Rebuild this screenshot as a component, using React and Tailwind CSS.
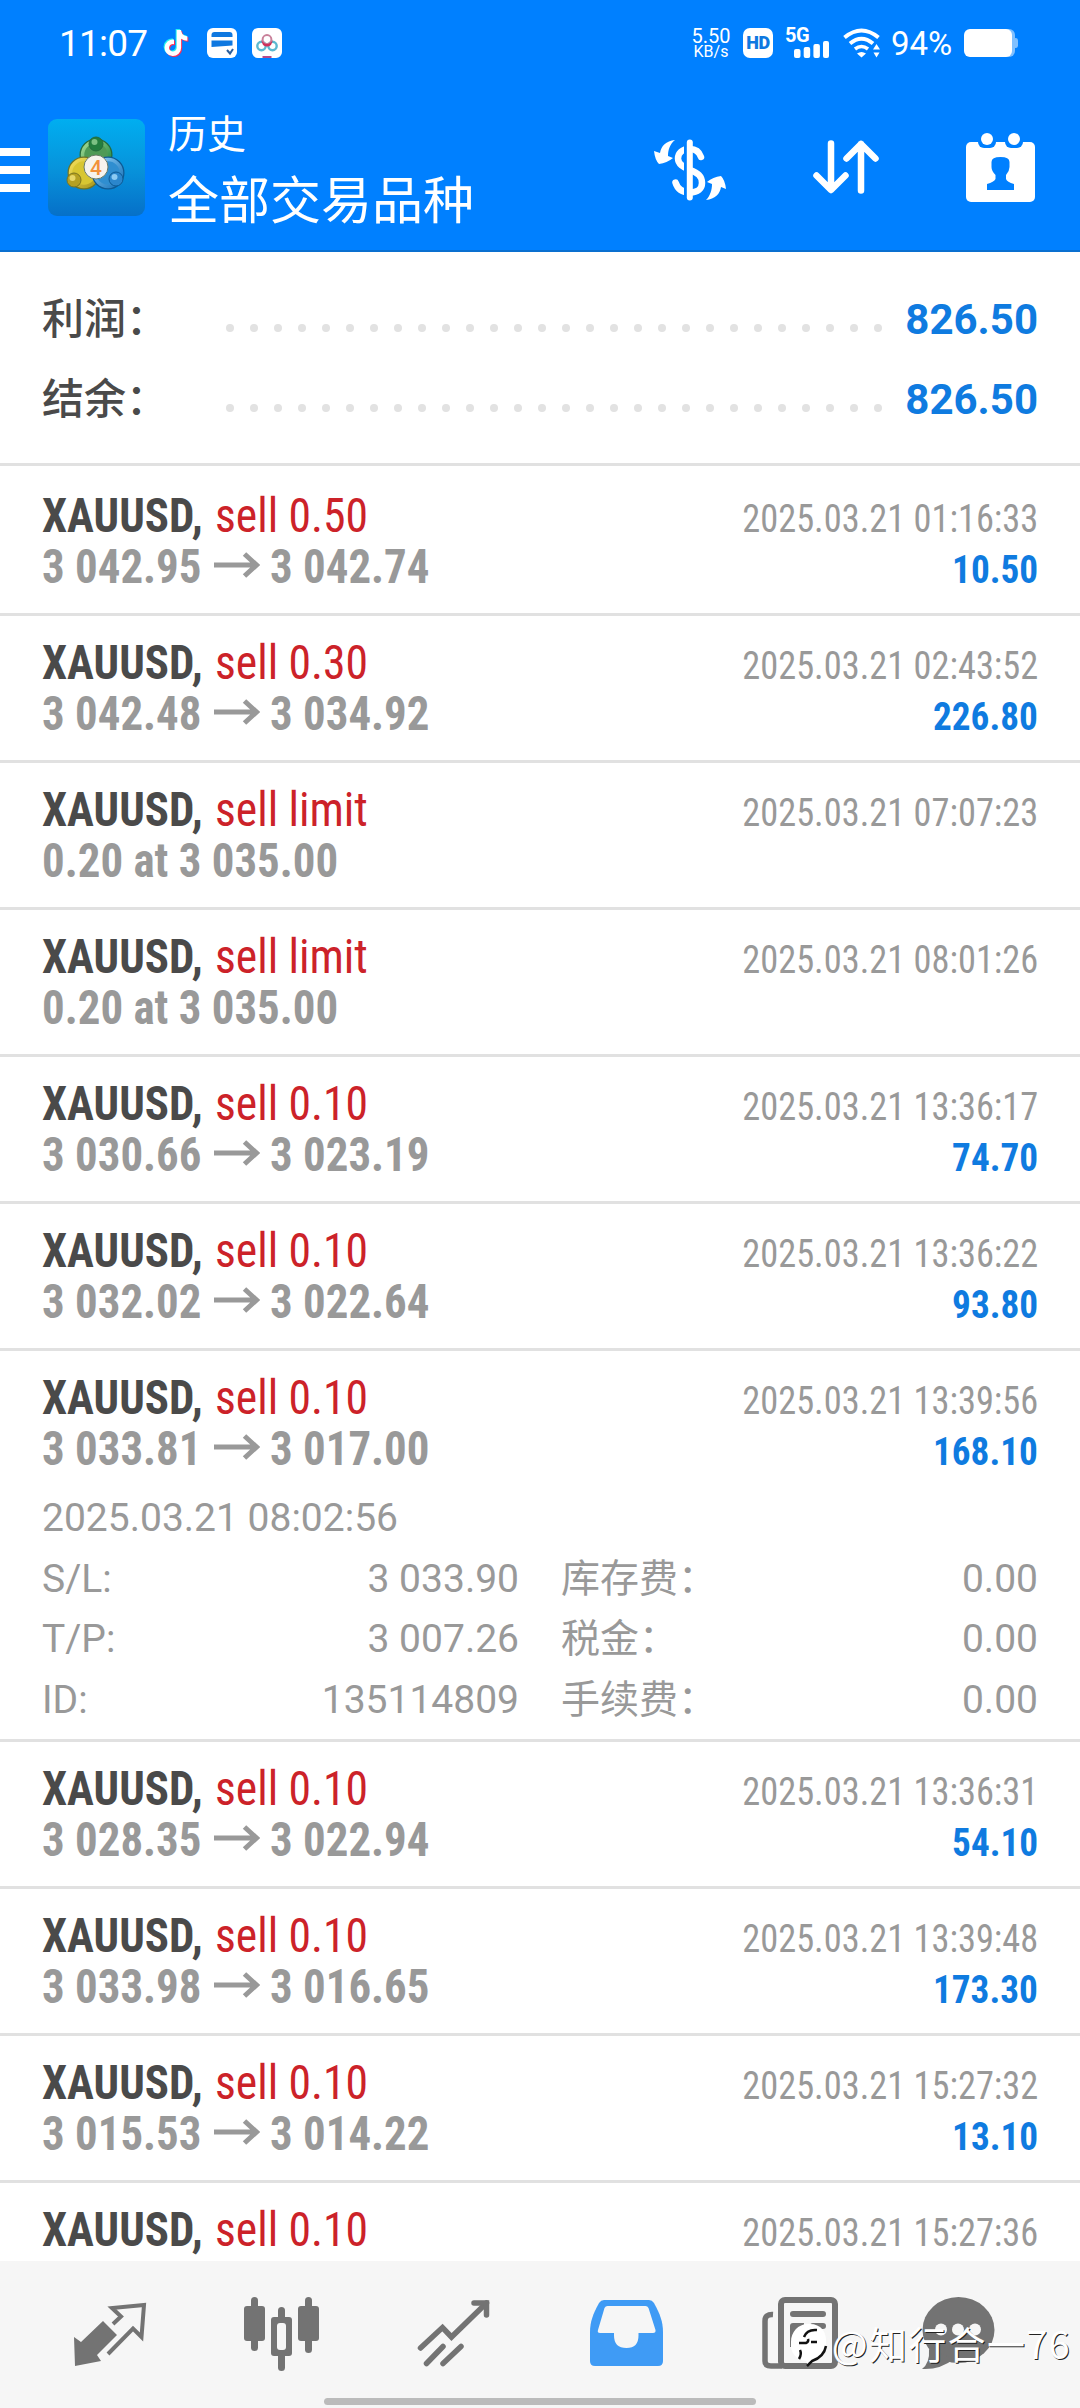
import { FaTiktok } from 'react-icons/fa6'

const SUMMARY = [
  { label: '利润：', value: '826.50' },
  { label: '结余：', value: '826.50' },
]

const DEALS = [
  { action: 'sell 0.50', from: '3 042.95', to: '3 042.74', time: '2025.03.21 01:16:33', profit: '10.50' },
  { action: 'sell 0.30', from: '3 042.48', to: '3 034.92', time: '2025.03.21 02:43:52', profit: '226.80' },
  { action: 'sell limit', order: '0.20 at 3 035.00', time: '2025.03.21 07:07:23' },
  { action: 'sell limit', order: '0.20 at 3 035.00', time: '2025.03.21 08:01:26' },
  { action: 'sell 0.10', from: '3 030.66', to: '3 023.19', time: '2025.03.21 13:36:17', profit: '74.70' },
  { action: 'sell 0.10', from: '3 032.02', to: '3 022.64', time: '2025.03.21 13:36:22', profit: '93.80' },
  {
    action: 'sell 0.10',
    from: '3 033.81',
    to: '3 017.00',
    time: '2025.03.21 13:39:56',
    profit: '168.10',
    details: {
      opened: '2025.03.21 08:02:56',
      rows: [
        ['S/L:', '3 033.90', '库存费：', '0.00'],
        ['T/P:', '3 007.26', '税金：', '0.00'],
        ['ID:', '135114809', '手续费：', '0.00'],
      ],
    },
  },
  { action: 'sell 0.10', from: '3 028.35', to: '3 022.94', time: '2025.03.21 13:36:31', profit: '54.10' },
  { action: 'sell 0.10', from: '3 033.98', to: '3 016.65', time: '2025.03.21 13:39:48', profit: '173.30' },
  { action: 'sell 0.10', from: '3 015.53', to: '3 014.22', time: '2025.03.21 15:27:32', profit: '13.10' },
  { action: 'sell 0.10', time: '2025.03.21 15:27:36' },
]

function StatusBar() {
  return (
    <div className="flex h-[84px] items-center pl-[59px] pr-[62px] pt-[2px] text-white">
      <span className="w-[93px] text-[37px] leading-none tracking-[-0.8px]">11:07</span>
      {/* Notification icons */}
      <div className="relative ml-[11px] size-[26px]">
        <FaTiktok size={26} className="absolute -left-px -top-px text-[#25f4ee]" />
        <FaTiktok size={26} className="absolute left-px top-px text-[#fe2c55]" />
        <FaTiktok size={26} className="absolute left-0 top-0" />
      </div>
      <svg className="ml-[18px]" width="30" height="30" viewBox="0 0 30 30">
        <rect width="30" height="30" rx="6" fill="#fff" />
        <path d="M4.500 9V7q0-3 3-3h15q3 0 3 3v2z" fill="#0f78e0" />
        <path d="M4.500 12.500h21v5l-21 1.500z" fill="#0f78e0" />
        <path d="M20 22l3 3.500 3-4.500" fill="none" stroke="#2b5f9e" strokeWidth="2" />
      </svg>
      <svg className="ml-[15px]" width="30" height="30" viewBox="0 0 30 30">
        <rect width="30" height="30" rx="6" fill="#fff" />
        <circle cx="9.500" cy="18" r="4.200" fill="none" stroke="#5bb9d0" strokeWidth="2.400" />
        <circle cx="20.500" cy="18" r="4.200" fill="none" stroke="#5bb9d0" strokeWidth="2.400" />
        <circle cx="15" cy="11.500" r="4.400" fill="none" stroke="#c9809a" strokeWidth="2" />
        <path d="M9 12q6 8 12 0l-2 5q-4 3-8 0z" fill="#d0305a" />
        <path d="M10.500 28h9v2h-9z" fill="#b84a8c" />
      </svg>

      <div className="ml-auto flex w-[40px] flex-col items-center">
        <span className="text-[20px] leading-[16px]">5.50</span>
        <span className="text-[16px] leading-[15px]">KB/s</span>
      </div>
      <div className="ml-[12px] flex h-[30px] w-[30px] items-center justify-center rounded-[7px] bg-white text-[18px] font-black leading-none tracking-[-0.5px] text-[#0f78e0]">
        HD
      </div>
      <div className="ml-[12px] flex h-[30px] w-[46px] flex-col">
        <span className="text-[20px] font-bold leading-[14px] tracking-[-0.5px]">5G</span>
        <svg className="-mt-px ml-[9px]" width="36" height="17" viewBox="0 0 36 17" fill="#fff">
          <rect x="0" y="8" width="6.500" height="9" rx="2" />
          <rect x="9.700" y="6" width="6.500" height="11" rx="2" />
          <rect x="19.400" y="3" width="6.500" height="14" rx="2" />
          <rect x="29" y="0" width="6" height="17" rx="2" />
        </svg>
      </div>
      <svg className="ml-[12px]" width="38" height="30" viewBox="0 0 38 30" fill="none" stroke="#fff" strokeWidth="4">
        <path d="M1.500 9.500Q18.500-4.500 35.500 9.500" />
        <path d="M7 15.500q11.500-9.500 23 0" />
        <path d="M12 21q6.500-5 13 0" strokeWidth="3.600" />
        <path d="M14 25.500l4.500 4 4.500-4q-4.500-3-9 0z" fill="#fff" stroke="none" />
        <path d="M33.500 16l3.500 5.500h-7zM33.500 29.500l3-5h-6z" fill="#fff" stroke="none" />
      </svg>
      <span className="ml-[10px] w-[64px] text-[33px] leading-none">94%</span>
      <svg className="ml-[9px]" width="54" height="28" viewBox="0 0 54 28">
        <rect x="2" width="49" height="28" rx="6" fill="#80c0ff" />
        <rect x="49" y="9" width="5" height="10" rx="2.500" fill="#80c0ff" />
        <rect width="48" height="28" rx="6" fill="#fff" />
      </svg>
    </div>
  )
}

function AppLogo() {
  return (
    <svg className="ml-[18px]" width="97" height="97" viewBox="0 0 97 97">
      <defs>
        <linearGradient id="tile" x1="0" y1="0" x2="0" y2="1">
          <stop offset="0" stopColor="#00aef0" />
          <stop offset="0.500" stopColor="#0794dc" />
          <stop offset="1" stopColor="#0670c8" />
        </linearGradient>
        <linearGradient id="green" x1="0" y1="0" x2="1" y2="1">
          <stop offset="0" stopColor="#a6dc96" />
          <stop offset="1" stopColor="#17813a" />
        </linearGradient>
        <linearGradient id="yellow" x1="0" y1="0" x2="1" y2="1">
          <stop offset="0" stopColor="#f5e15a" />
          <stop offset="1" stopColor="#a8961c" />
        </linearGradient>
        <linearGradient id="blue" x1="0" y1="0" x2="1" y2="1">
          <stop offset="0" stopColor="#8fd0f7" />
          <stop offset="1" stopColor="#1470b8" />
        </linearGradient>
      </defs>
      <rect width="97" height="97" rx="9" fill="url(#tile)" />
      <circle cx="48" cy="36" r="15" fill="#4f9a56" stroke="#256b3c" strokeWidth="3" />
      <circle cx="48" cy="36" r="13.500" fill="none" stroke="url(#green)" strokeWidth="3.500" />
      <circle cx="36" cy="54" r="15" fill="#d8c632" stroke="#6e7426" strokeWidth="3" />
      <circle cx="36" cy="54" r="13.500" fill="none" stroke="url(#yellow)" strokeWidth="3.500" />
      <circle cx="60" cy="54" r="15" fill="#2f8ed0" stroke="#0d5a94" strokeWidth="3" />
      <circle cx="60" cy="54" r="13.500" fill="none" stroke="url(#blue)" strokeWidth="3.500" />
      <circle cx="48" cy="25" r="7" fill="#237d3e" stroke="#256b3c" />
      <circle cx="46.500" cy="23" r="3" fill="#7cc083" />
      <circle cx="26" cy="61" r="7" fill="#b5a022" stroke="#7b7420" />
      <circle cx="24.500" cy="59" r="3" fill="#e6d668" />
      <circle cx="68" cy="60" r="7" fill="#2b86cc" stroke="#0d5a94" />
      <circle cx="66.500" cy="58" r="3" fill="#8ccaf2" />
      <circle cx="48" cy="48" r="12" fill="#f6f3ee" stroke="#6b7c6a" />
      <text x="48" y="55.500" textAnchor="middle" fontSize="21" fontWeight="500" fontFamily="Roboto" fill="#f2913a">
        4
      </text>
    </svg>
  )
}

function Toolbar() {
  return (
    <div className="flex h-[166px] items-center text-white">
      <div className="flex w-[30px] flex-col gap-[10px] pt-[6px]">
        <div className="h-[8px] bg-white" />
        <div className="h-[8px] bg-white" />
        <div className="h-[8px] bg-white" />
      </div>
      <AppLogo />
      <div className="ml-[23px] flex flex-col pt-[13px]">
        <span className="text-[39px] leading-[54px]">历史</span>
        <span className="mt-[3px] text-[51px] leading-[74px]">全部交易品种</span>
      </div>

      <div className="ml-auto flex items-center pr-[45px]">
        <svg width="100" height="90" viewBox="0 0 100 90" fill="none">
          <path
            d="M61 35C59 29 55 27 50 27C42 27 38 31 38 36.500C38 42 43 45 50 48C58 51 62 54 62 61C62 66.500 58 70.500 50 70.500C42 70.500 37.500 67 35.500 60.500"
            stroke="#fff"
            strokeWidth="6.500"
            strokeLinecap="round"
          />
          <path d="M45.500 20v56" stroke="#0080ff" strokeWidth="3" />
          <path d="M49.800 20.500v55" stroke="#fff" strokeWidth="6" strokeLinecap="round" />
          <path d="M35 18C26 19 21 24 20 31L14 29Q15 38 19 42Q27 41 33 36L28 34C28 28 30 22 35 18Z" fill="#fff" />
          <path d="M66 78C75 77 80 72 81 65L86 67Q85 58 81 54Q73 55 67 60L72 62C72 68 70 74 66 78Z" fill="#fff" />
        </svg>
        <svg
          className="ml-[73px]"
          width="66"
          height="54"
          viewBox="0 0 66 54"
          fill="none"
          stroke="#fff"
          strokeWidth="6.500"
          strokeLinecap="round"
          strokeLinejoin="round"
        >
          <path d="M18 3.500v46M3.500 35.500L18 50l14.500-14.500" />
          <path d="M48 50.500V4M33.500 18.500L48 4l14.500 14.500" />
        </svg>
        <svg className="ml-[87px]" width="69" height="69" viewBox="0 0 69 69" fill="#fff">
          <rect y="9" width="69" height="60" rx="5" />
          <rect x="12" y="-3" width="18" height="18" rx="6" fill="#0080ff" />
          <rect x="39" y="-3" width="18" height="18" rx="6" fill="#0080ff" />
          <circle cx="21" cy="6" r="6" />
          <circle cx="48" cy="6" r="6" />
          <path
            d="M25.500 29Q25.500 24 34.500 24Q43.500 24 43.500 29V34Q43.500 38 40 42V46Q41 49 48 51V57H21V51Q28 49 29.500 46V42Q25.500 38 25.500 34Z"
            fill="#0080ff"
          />
        </svg>
      </div>
    </div>
  )
}

function SummaryRow({ label, value }) {
  return (
    <div className="flex h-[80px] items-center">
      <span className="w-[184px] text-[42px] font-medium leading-[80px] text-[#4a4a4a]">{label}</span>
      <div className="flex flex-1 justify-between pt-[16px]">
        {Array.from({ length: 28 }, (_, i) => (
          <div key={i} className="size-[8px] rounded-full bg-[#e2e2e2]" />
        ))}
      </div>
      <span className="w-[156px] text-right text-[42px] font-bold leading-[80px] text-[#0f7be0]">{value}</span>
    </div>
  )
}

function PriceLine({ order, from, to }) {
  if (order) return <span className="origin-left scale-x-[0.935]">{order}</span>
  return (
    <>
      <span className="w-[172px] origin-left scale-x-[0.935] whitespace-nowrap">{from}</span>
      <svg width="46" height="31" viewBox="0 0 46 31" fill="none" stroke="currentColor" strokeWidth="5">
        <path d="M0 13h42M30.500 2l12 11-12 11" />
      </svg>
      <span className="ml-[10px] origin-left scale-x-[0.935]">{to}</span>
    </>
  )
}

function DealRow({ deal }) {
  const { action, order, from, to, time, profit, details } = deal
  return (
    <div className="border-b-[3px] border-[#e1e1e1] px-[42px] pt-[21px] first:pt-[24px]">
      <div className="font-['Roboto_Condensed','Noto_Sans_CJK_SC',sans-serif]">
        <div className="flex h-[51px] items-baseline text-[48px] leading-[51px]">
          <span className="w-[173px] origin-left scale-x-[0.935] whitespace-nowrap font-bold text-[#4a4a4a]">
            XAUUSD,
          </span>
          <span className="origin-left scale-x-[0.95] font-[450] text-[#cc2229]">{action}</span>
          <span className="ml-auto origin-right scale-x-[0.933] text-[39px] text-[#999]">{time}</span>
        </div>
        {(order || from) && (
          <div className="flex h-[51px] items-baseline text-[48px] font-bold leading-[51px] text-[#999]">
            <PriceLine order={order} from={from} to={to} />
            <span className="ml-auto origin-right scale-x-[0.955] text-[39px] text-[#0f7be0]">{profit}</span>
          </div>
        )}
      </div>

      {details ? (
        <div className="mt-[14px] pb-[9px] text-[39px] leading-[60.5px] text-[#999]">
          <div>{details.opened}</div>
          {details.rows.map(([k1, v1, k2, v2]) => (
            <div key={k1} className="grid h-[60.5px] grid-cols-2 gap-[42px]">
              <div className="flex justify-between">
                <span>{k1}</span>
                <span>{v1}</span>
              </div>
              <div className="flex justify-between">
                <span>{k2}</span>
                <span>{v2}</span>
              </div>
            </div>
          ))}
        </div>
      ) : (
        <div className="h-[21px]" />
      )}
    </div>
  )
}

function BottomNav() {
  return (
    <div className="h-[147px] shrink-0 bg-[#f6f6f6] text-[#737373]">
      <div className="flex h-[137px] pt-[34px]">
        {/* Quotes */}
        <svg className="ml-[70px]" width="80" height="80" viewBox="0 0 80 80">
          <path d="M4 42L11 47L33 26L47 40L27 60L31 66L5 71Z" fill="currentColor" />
          <path d="M43 29L51 21.500L42 13L74 10L71.500 42L63 33.500L38 59" fill="none" stroke="currentColor" strokeWidth="4" />
        </svg>
        {/* Charts */}
        <svg className="ml-[90px]" width="80" height="80" viewBox="0 0 80 80" fill="currentColor">
          <rect x="11" y="2" width="7" height="54" rx="3.500" />
          <rect x="4" y="11" width="21" height="35" rx="3" />
          <rect x="38" y="12" width="7" height="64" rx="3.500" />
          <rect x="31" y="22" width="21" height="39" rx="3" />
          <rect x="37" y="28" width="9" height="27" rx="3" fill="#f6f6f6" />
          <rect x="65" y="2" width="7" height="56" rx="3.500" />
          <rect x="58" y="11" width="21" height="35" rx="3" />
        </svg>
        {/* Trade */}
        <svg
          className="ml-[95px]"
          width="80"
          height="80"
          viewBox="0 0 80 80"
          fill="none"
          stroke="currentColor"
          strokeWidth="5.500"
          strokeLinecap="round"
        >
          <path d="M5.500 53L27.500 32.500L36.500 42L71.500 8" />
          <path d="M59 8H71.500V20" />
          <path d="M11.500 68.500L28 51.500M28 68.500L46 51.500" />
        </svg>
        {/* History */}
        <svg className="ml-[95px] mt-[5px]" width="73" height="66" viewBox="0 0 73 66">
          <path
            d="M14 0H59Q62 0 64 3C70 14 73 22 73 32V61Q73 66 68 66H5Q0 66 0 61V32C0 22 3 14 9 3Q11 0 14 0Z"
            fill="#3f9bf5"
          />
          <path
            d="M17.500 6H55.500Q57.500 6 58.500 8L65.500 30Q66 33 63 33H48.500V35.500Q48.500 48 36.500 48Q24 48 24 35.500V33H10Q7 33 8 30L14.500 8Q15.500 6 17.500 6Z"
            fill="#f6f6f6"
          />
        </svg>
        {/* News */}
        <svg className="ml-[99px] mt-[2px]" width="76" height="72" viewBox="0 0 76 72" fill="none" stroke="currentColor">
          <rect x="19" y="3" width="54" height="66" rx="4" strokeWidth="6" />
          <path d="M11 17.500Q3 17 3 24V64Q3 69 9 69H20" strokeWidth="5.500" />
          <path d="M31 17H61M51 29H61" strokeWidth="6" strokeLinecap="round" />
          <path d="M28 29Q28 26 31 26H42V50H28Z" fill="currentColor" stroke="none" />
        </svg>
        {/* Messages */}
        <svg className="ml-[84px] mt-[2px]" width="73" height="73" viewBox="0 0 73 73">
          <ellipse cx="36.500" cy="33" rx="36" ry="33" fill="currentColor" />
          <path d="M0 72Q8 66 7 52L32 62Q18 73 0 72Z" fill="currentColor" />
          <circle cx="19" cy="32.500" r="6" fill="#f6f6f6" />
          <circle cx="36" cy="32.500" r="6" fill="#f6f6f6" />
          <circle cx="53" cy="32.500" r="6" fill="#f6f6f6" />
        </svg>
      </div>
      {/* Gesture bar */}
      <div className="mx-auto h-[7px] w-[432px] rounded-full bg-[#bbb]" />
    </div>
  )
}

function Watermark() {
  return (
    <div className="absolute bottom-[40px] right-[9px] flex items-center">
      <svg className="mt-[4px]" width="38" height="46" viewBox="0 0 38 46">
        <path
          d="M18 2C30 1 37 9 36 21C36 31 30 37 22 39L18 44L16 39C6 38 0 31 1 20C1 10 8 2 18 2Z"
          fill="#fff"
        />
        <path
          d="M14 15Q17 7 27 8M9 21H16Q19 20 18 17M21 20H27M10 28Q12 32 9 37M36 24Q34 35 22 39L17 44"
          fill="none"
          stroke="#111"
          strokeWidth="2.500"
        />
      </svg>
      <span className="ml-[4px] font-['Noto_Sans_CJK_SC',sans-serif] text-[38px] font-normal leading-[46px] tracking-[1.3px] text-white [text-shadow:1px_1px_0_#222]">
        @知行合一76
      </span>
    </div>
  )
}

export default function App() {
  return (
    <div className="relative flex h-[2408px] w-[1080px] flex-col overflow-hidden bg-white font-['Roboto','Noto_Sans_CJK_SC',sans-serif]">
      <header className="h-[252px] shrink-0 border-b-2 border-[#0a70d0] bg-[#0080ff]">
        <StatusBar />
        <Toolbar />
      </header>

      <div className="shrink-0 border-b-[3px] border-[#e1e1e1] px-[42px] pb-[23px] pt-[28px]">
        {SUMMARY.map((s) => (
          <SummaryRow key={s.label} label={s.label} value={s.value} />
        ))}
      </div>

      <div className="min-h-0 flex-1 overflow-hidden">
        {DEALS.map((d) => (
          <DealRow key={d.time} deal={d} />
        ))}
      </div>

      <BottomNav />
      <Watermark />
    </div>
  )
}
